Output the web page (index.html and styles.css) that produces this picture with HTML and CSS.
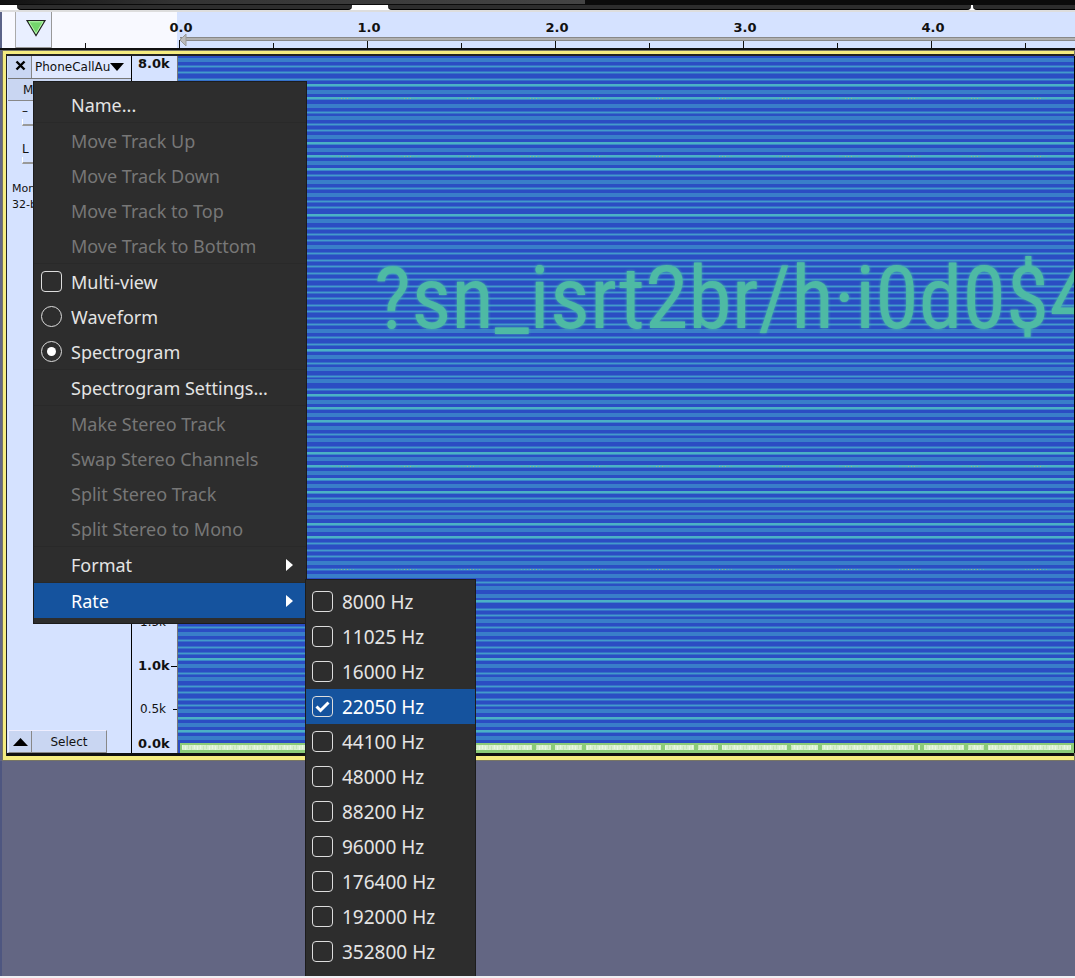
FILE: index.html
```html
<!DOCTYPE html>
<html lang="en">
<head>
<meta charset="utf-8">
<title>PhoneCallAudio</title>
<link rel="stylesheet" href="styles.css">
</head>
<body>
<div class="app">
  <div class="titlebar"><span class="titlebar-glow"></span></div>
  <div class="dock"><span class="dock-bar dock-a"></span><span class="dock-bar dock-b"></span><span class="dock-bar dock-c"></span></div>
  <header class="timeline">
    <div class="timeline-grip"></div>
    <button class="pin" aria-label="Pinned play head"><svg width="22" height="18" viewBox="0 0 22 18"><path d="M2 1.500H20L11 16.500Z" fill="#74d66c" stroke="#222" stroke-width="1.200"/><path d="M4 2.800H18L11 14.500Z" fill="none" stroke="#b9f5ae" stroke-width="1"/></svg></button>
    <div class="scale">
      <div class="tick"><span>0.0</span></div>
      <div class="tick"><span>1.0</span></div>
      <div class="tick"><span>2.0</span></div>
      <div class="tick"><span>3.0</span></div>
      <div class="tick"><span>4.0</span></div>
      <div class="tick"></div>
    </div>
    <div class="range"></div>
    <svg class="marker" width="8" height="14" viewBox="0 0 8 14"><path d="M7 1V13L1 7Z" fill="#bbb" stroke="#999"/></svg>
  </header>
  <main class="track">
    <section class="panel">
      <div class="panel-head">
        <button class="close" aria-label="Close track"><svg width="11" height="11" viewBox="0 0 11 11"><path d="M1.500 1.500L9.500 9.500M9.500 1.500L1.500 9.500" stroke="#000" stroke-width="2.400"/></svg></button>
        <button class="name">PhoneCallAu<svg width="14" height="8" viewBox="0 0 14 8"><path d="M0 0H14L7 8Z"/></svg></button>
      </div>
      <div class="panel-mute"><button>Mute</button><button>Solo</button></div>
      <div class="slider"><span>–</span><i></i></div>
      <div class="slider"><span>L</span><i></i></div>
      <p class="info">Mono, 22050Hz<br>32-bit float</p>
      <div class="panel-foot">
        <button class="collapse" aria-label="Collapse"><svg width="15" height="8" viewBox="0 0 15 8"><path d="M7.500 0L15 8H0Z"/></svg></button>
        <button class="select">Select</button>
      </div>
    </section>
    <section class="freq">
      <b>8.0k</b>
      <div class="freq-low">
        <span class="f15">1.5k<i></i></span>
        <b class="f10">1.0k<i></i></b>
        <span class="f05">0.5k<i class="short"></i></span>
        <b class="f00">0.0k</b>
      </div>
    </section>
    <section class="spectrogram">
      <canvas id="spectrum"></canvas>
      <div class="message">?sn_isrt2br/h·i0d0$4</div>
    </section>
  </main>
  <div class="workspace"></div>
  <div class="edge"></div>

  <div class="menu track-menu">
    <button>Name...</button>
    <hr>
    <button disabled>Move Track Up</button>
    <button disabled>Move Track Down</button>
    <button disabled>Move Track to Top</button>
    <button disabled>Move Track to Bottom</button>
    <hr>
    <label><input type="checkbox">Multi-view</label>
    <label><input type="radio" name="view">Waveform</label>
    <label><input type="radio" name="view" checked>Spectrogram</label>
    <hr>
    <button>Spectrogram Settings...</button>
    <hr>
    <button disabled>Make Stereo Track</button>
    <button disabled>Swap Stereo Channels</button>
    <button disabled>Split Stereo Track</button>
    <button disabled>Split Stereo to Mono</button>
    <hr>
    <button>Format<svg width="7" height="12" viewBox="0 0 7 12"><path d="M0 0L7 6L0 12Z"/></svg></button>
    <hr>
    <button class="active">Rate<svg width="7" height="12" viewBox="0 0 7 12"><path d="M0 0L7 6L0 12Z"/></svg></button>
  </div>
  <div class="menu rate-menu">
    <label><input type="checkbox">8000 Hz</label>
    <label><input type="checkbox">11025 Hz</label>
    <label><input type="checkbox">16000 Hz</label>
    <label class="active"><input type="checkbox" checked>22050 Hz<svg class="check" width="15" height="12" viewBox="0 0 15 12"><path d="M1.500 5.500L5.500 9.500L13.500 1.500"/></svg></label>
    <label><input type="checkbox">44100 Hz</label>
    <label><input type="checkbox">48000 Hz</label>
    <label><input type="checkbox">88200 Hz</label>
    <label><input type="checkbox">96000 Hz</label>
    <label><input type="checkbox">176400 Hz</label>
    <label><input type="checkbox">192000 Hz</label>
    <label><input type="checkbox">352800 Hz</label>
    <label><input type="checkbox" aria-label="384000 Hz"></label>
  </div>
</div>
<script src="spectrum.js"></script>
</body>
</html>
```
FILE: styles.css
```css
* { box-sizing: border-box; }
body { margin: 0; font-family: "DejaVu Sans", sans-serif; font-size: 12px; color: #111; }
button { font: inherit; color: inherit; border: 0; padding: 0; background: none; }
.app { position: relative; display: flex; flex-direction: column; height: 100vh; overflow: hidden; background: #636683; }

.titlebar { height: 5px; background: #0b0b0b; }
.titlebar-glow { display: block; width: 585px; height: 4px; background: linear-gradient(90deg, #111, #333 30%, #444); }
.dock { display: flex; gap: 2px; height: 5px; padding-left: 17px; background: #fff; }
.dock-bar { background: #2d2d2d; border-bottom: 1px solid #000; }
.dock-a { width: 335px; border-radius: 0 0 4px 4px; }
.dock-b { width: 583px; margin-left: 34px; border-radius: 0 0 4px 4px; }
.dock-c { flex: 1; border-radius: 0 0 0 4px; }

.timeline { position: relative; display: flex; height: 40px; border-top: 2px solid #ddd; border-bottom: 2px solid #111; background: linear-gradient(90deg, #f8f9ff 177px, #d5e2ff 177px); }
.timeline-grip { width: 16px; border-left: 2px solid #5c6488; border-right: 1px solid #aaa; background: #f8f9ff; }
.pin { display: flex; width: 36px; padding: 7px 0 0 9px; border-right: 1px solid #999; border-bottom: 1px solid #999; background: #e9efff; }
.scale { display: flex; flex: 1; margin-left: 33px; overflow: hidden; }
.tick { position: relative; display: flex; flex: 0 0 188px; flex-direction: column; align-items: center; padding-top: 8px; font-size: 13px; line-height: 15px; font-weight: bold; }
.tick::before { content: ""; position: absolute; left: 0; bottom: 0; width: 1px; height: 5px; background: #111; }
.tick::after { content: ""; position: absolute; left: 50%; bottom: 0; width: 1px; height: 8px; background: #111; }
.tick span { padding-left: 4px; }
.range { position: absolute; left: 180px; right: 0; bottom: 7px; height: 4px; border-top: 1px solid #888; border-bottom: 1px solid #888; background: #b0b0b0; }
.marker { position: absolute; left: 179px; bottom: 1px; }

.track { display: flex; height: 711px; margin-left: 2px; border: solid #f5ec80; border-width: 4px 0 5px 4px; box-shadow: inset 1px 2px #222, inset 0 -3px #111; padding: 2px 0 3px 2px; outline: 1px solid #777564; outline-offset: -1px; background: #d5e2ff; }
.panel { display: flex; flex-direction: column; width: 124px; border-right: 1px solid #000; }
.panel-head { display: flex; height: 23px; border-bottom: 1px solid #777; background: #dfe8ff; }
.close { width: 24px; padding-left: 2px; border-right: 1px solid #888; background: #c9d6f2; }
.name { flex: 1; display: flex; align-items: center; padding-left: 3px; font-size: 12px; white-space: nowrap; }
.panel-mute { display: flex; height: 22px; border-bottom: 1px solid #888; background: #c9d6f2; }
.panel-mute button { flex: 1; text-align: left; padding-left: 15px; }
.slider { display: flex; flex-direction: column; height: 38px; padding: 3px 14px 0; }
.slider span { height: 15px; line-height: 15px; }
.slider i { height: 7px; border-left: 1px solid #fff; border-bottom: 2px solid #999; }
.info { margin: 4px 0 0 4px; font-size: 11px; line-height: 16px; white-space: nowrap; overflow: hidden; }
.panel-foot { display: flex; width: 99px; height: 23px; margin-top: auto; border: 1px solid #eef; border-right-color: #888; border-bottom-color: #888; background: #c9d6f2; }
.collapse { width: 23px; border-right: 1px solid #888; }
.select { flex: 1; }

.freq { display: flex; flex-direction: column; justify-content: space-between; width: 46px; padding-left: 6px; border-right: 1px solid #777; font-size: 12px; line-height: 16px; }
.freq b { font-size: 13px; }
.freq-low { display: flex; flex-direction: column; }
.freq-low > * { display: flex; align-items: center; justify-content: space-between; height: 16px; }
.freq-low span { padding-left: 2px; }
.freq-low i { width: 6px; height: 1px; background: #000; }
.freq-low .short { width: 4px; }
.f10 { margin-top: 28px; }
.f05 { margin-top: 27px; }
.f00 { margin: 19px 0 1px; }

.spectrogram { position: relative; flex: 1; min-width: 0; overflow: hidden; border-right: 1px solid #000; background: #2c50c4; }
.spectrogram canvas { display: block; width: 100%; height: 100%; }
.message { position: absolute; left: 196px; top: 182px; font-family: "Roboto Condensed", "Liberation Sans Narrow", sans-serif; font-size: 88px; line-height: 120px; font-weight: 400; white-space: nowrap; color: #4ebaa4; text-shadow: 0 0 3px #48b8a8; }

.workspace { flex: 1; border-left: 2px solid #4e5680; }
.edge { height: 2px; background: #f0f0f4; }

.menu { position: absolute; display: flex; flex-direction: column; border: 1px solid #1c1c1c; background: #2d2d2d; color: #e4e4e4; font-family: "Noto Sans", sans-serif; }
.track-menu { left: 33px; top: 81px; width: 274px; padding: 5px 0; font-size: 18px; }
.rate-menu { left: 305px; top: 579px; bottom: 2px; width: 171px; padding-top: 4px; overflow: hidden; border-bottom: 0; font-size: 19px; }
.menu button, .menu label { display: flex; flex: 0 0 35px; align-items: center; text-align: left; }
.menu button { justify-content: space-between; padding: 0 13px 0 37px; }
.menu button:disabled { color: #777; }
.menu label { position: relative; gap: 9px; padding-left: 7px; }
.rate-menu label { padding-left: 6px; }
.menu hr { width: 100%; margin: 0; border: 0; border-top: 1px solid #292929; }
.menu svg { fill: #fff; }
.menu .active { background: #15539e; color: #fff; }
.menu input { appearance: none; display: grid; place-items: center; width: 21px; height: 21px; margin: 0; border: 1px solid #ddd; border-radius: 4px; }
.menu input[type="radio"] { border-radius: 50%; }
.menu input[type="radio"]:checked::after { content: ""; width: 9px; height: 9px; border-radius: 50%; background: #fff; }
.menu .check { position: absolute; left: 9px; top: 12px; fill: none; stroke: #fff; stroke-width: 3; }
```
FILE: spectrum.js
```js
const canvas = document.getElementById('spectrum');
const w = canvas.width = canvas.clientWidth;
const h = canvas.height = canvas.clientHeight;
const ctx = canvas.getContext('2d');
ctx.fillStyle = '#2b4dc3';
ctx.fillRect(0, 0, w, h);

// Centre rows of the harmonics; b = bright, w = wide and faint, the rest plain.
const rows = '4w 10 16 23 29b 36w 42b 50w 56 62w 68 74 81w 87b 94w 100b 107w 113b 119 126w 132 139w 145 151 159b 165w 172 178 184 191w 197 204 210 217 223 230 236 242 249 255 262 268 275w 281 288 294b 301w 307 313w 320 325w 333 339b 346w 352b 359w 365b 372w 378 384w 391 397b 403w 410b 417w 423b 430w 436b 442 449w 455 461w 468b 474w 481b 487 494 500 507w 513 520w 526 532w 540w 545b 553 559 565w 571 578w 584 591 597 603b 610w 617 623w 630 636 643 649 655w 662b 669w 675b 682w';
rows.split(' ').forEach((row) => {
  const y = parseInt(row, 10);
  if (row.endsWith('w')) {
    ctx.fillStyle = '#397ec9';
    ctx.fillRect(0, y - 2, w, 4);
  } else if (row.endsWith('b')) {
    ctx.fillStyle = '#3b88c9';
    ctx.fillRect(0, y - 1, w, 3);
    ctx.fillStyle = '#4bb1c5';
    ctx.fillRect(0, y - 1, w, 2);
  } else {
    ctx.fillStyle = '#3570c8';
    ctx.fillRect(0, y - 1, w, 3);
    ctx.fillStyle = '#439aca';
    ctx.fillRect(0, y, w, 1);
  }
});

// Faint yellow pulses along the strongest harmonics.
[42, 100, 410, 513].forEach((y) => {
  for (let x = 40; x < w; x += 63) {
    for (let i = -12; i < 12; i += 3) {
      ctx.fillStyle = Math.abs(i) < 5 ? '#8fb688' : '#62b0a8';
      ctx.fillRect(x + i, y, 1, 1);
    }
  }
});

// Low-frequency noise floor.
ctx.fillStyle = '#8ccb79';
ctx.fillRect(2, h - 10, w, 10);
ctx.fillStyle = '#d9f0cf';
ctx.fillRect(4, h - 8, w, 5);
for (let x = 4; x < w; x += 3) {
  ctx.fillStyle = (x * 7) % 5 < 2 ? '#c6e7b8' : '#e8f8e4';
  ctx.fillRect(x, h - 8 + (x % 2), 1, 4);
}
ctx.fillStyle = '#8ccb79';
[354, 373, 404, 483, 516, 540, 609, 640, 736, 742, 786, 806, 893].forEach((x) => ctx.fillRect(x, h - 9, 4, 7));
```
